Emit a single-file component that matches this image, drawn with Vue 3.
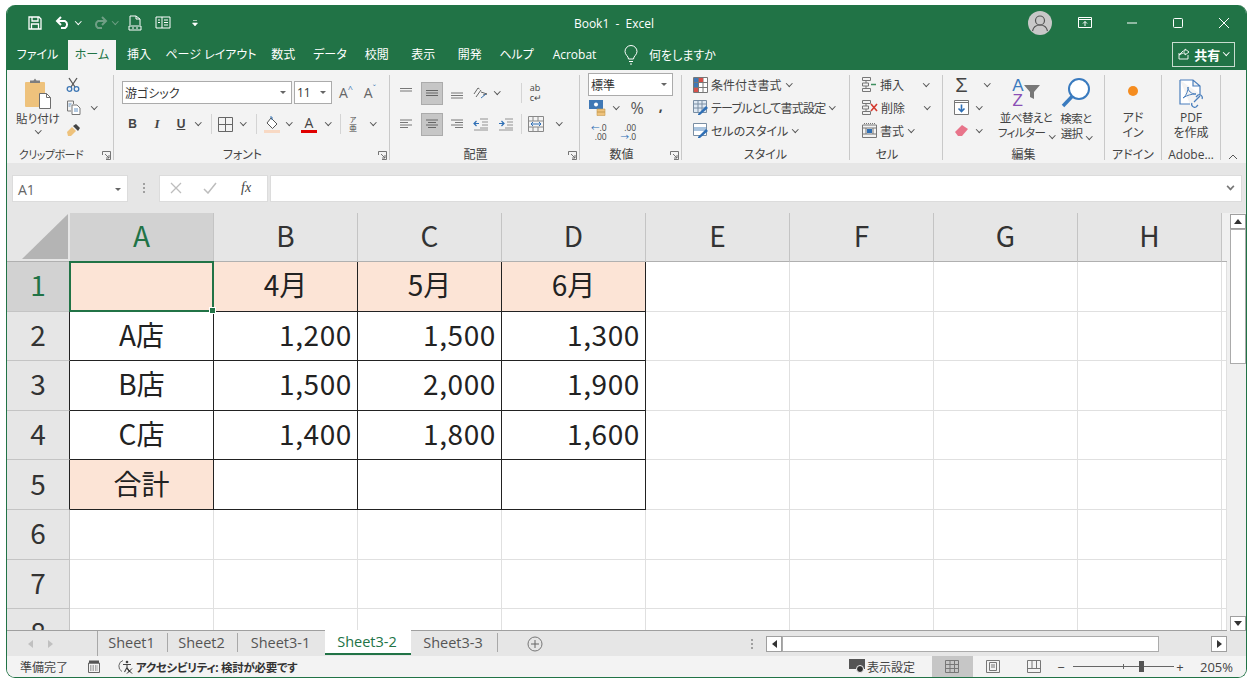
<script setup>
const columns = ['A', 'B', 'C', 'D', 'E', 'F', 'G', 'H']
const rowNumbers = [1, 2, 3, 4, 5, 6, 7, 8]
const tableRows = [
  { label: '', fill: true, values: ['4月', '5月', '6月'], head: true },
  { label: 'A店', values: ['1,200', '1,500', '1,300'] },
  { label: 'B店', values: ['1,500', '2,000', '1,900'] },
  { label: 'C店', values: ['1,400', '1,800', '1,600'] },
  { label: '合計', fill: true, values: ['', '', ''] }
]
const tabs = [
  { name: 'ファイル', cls: 't-file' },
  { name: 'ホーム', cls: 't-home' },
  { name: '挿入', cls: 't-ins' },
  { name: 'ページ レイアウト', cls: 't-page' },
  { name: '数式', cls: 't-a' },
  { name: 'データ', cls: 't-b' },
  { name: '校閲', cls: 't-a' },
  { name: '表示', cls: 't-a' },
  { name: '開発', cls: 't-a' },
  { name: 'ヘルプ', cls: 't-b' },
  { name: 'Acrobat', cls: 't-acro' }
]
const sheets = [
  { name: 'Sheet1', cls: 's-short' },
  { name: 'Sheet2', cls: 's-short' },
  { name: 'Sheet3-1', cls: 's-long' },
  { name: 'Sheet3-2', cls: 's-active' },
  { name: 'Sheet3-3', cls: 's-long' }
]
</script>

<template>
  <div class="window">
    <header class="titlebar">
      <div class="qat">
        <svg width="14" height="14" viewBox="0 0 14 14" class="q-save"><path d="M1 1h10l2 2v10H1z M4 1v4h6V1 M3.500 13V8h7v5" fill="none" stroke="#fff" stroke-width="1.300"/></svg>
        <svg width="16" height="13" viewBox="0 0 16 13" class="q-undo"><path d="M2 5h8a4 4 0 0 1 0 7H6M6 1L2 5l4 4" fill="none" stroke="#fff" stroke-width="2"/></svg>
        <span class="chev white q-chev"></span>
        <svg width="16" height="13" viewBox="0 0 16 13" class="q-redo"><path d="M14 5H6a4 4 0 0 0 0 7h4M10 1l4 4-4 4" fill="none" stroke="#6f9f85" stroke-width="2"/></svg>
        <span class="chev dim q-chev"></span>
        <svg width="14" height="16" viewBox="0 0 14 16" class="q-prev"><path d="M2 10V1h6l4 3v6M8 1v3h4M1 11h12v4H1z" fill="none" stroke="#fff"/><path d="M4 13h2M8 13h2" stroke="#fff"/></svg>
        <svg width="16" height="13" viewBox="0 0 16 13" class="q-form"><path d="M1 1h14v11H1zM7 1v11M9 4h4M9 6.500h4M9 9h4M3 4h2M3 6.500h2" fill="none" stroke="#fff"/></svg>
        <svg width="8" height="8" viewBox="0 0 8 8" class="q-more"><path d="M2 1.500h4M1.500 4h5L4 7z" fill="#fff" stroke="#fff" stroke-width=".6"/></svg>
      </div>
      <div class="doc-title">Book1 &nbsp;-&nbsp; Excel</div>
      <div class="win-ctrl">
        <svg width="24" height="24" viewBox="0 0 24 24" class="avatar"><circle cx="12" cy="12" r="12" fill="#c8c8c8"/><circle cx="12" cy="9.500" r="4.500" fill="none" stroke="#555" stroke-width="1.200"/><path d="M4.500 20c1-4.500 4-6 7.500-6s6.500 1.500 7.500 6" fill="none" stroke="#555" stroke-width="1.200"/></svg>
        <svg width="14" height="11" viewBox="0 0 14 11" class="c-disp"><path d="M.5.500h13v10H.5zM.5 2.500h13M7 9V4.500M5 6.500l2-2 2 2" fill="none" stroke="#fff"/></svg>
        <svg width="12" height="12" viewBox="0 0 12 12" class="c-min"><path d="M1 6h10" stroke="#fff"/></svg>
        <svg width="12" height="12" viewBox="0 0 12 12" class="c-max"><rect x="1.500" y="1.500" width="9" height="9" rx="1" fill="none" stroke="#fff"/></svg>
        <svg width="12" height="12" viewBox="0 0 12 12" class="c-close"><path d="M1 1l10 10M11 1L1 11" stroke="#fff"/></svg>
      </div>
    </header>

    <nav class="tabbar">
      <span v-for="tab in tabs" :key="tab.name" class="tab" :class="tab.cls">{{ tab.name }}</span>
      <svg width="14" height="20" viewBox="0 0 14 20" class="bulb"><path d="M4.500 14c0-3-3.500-4-3.500-7.500a6 6 0 0 1 12 0c0 3.500-3.500 4.500-3.500 7.500zM5 16.500h4M6 19h2" fill="none" stroke="#fff"/></svg>
      <span class="tell">何をしますか</span>
      <div class="share">
        <svg width="12" height="12" viewBox="0 0 12 12"><path d="M1 5v6h9V7M1 7l4-4h2V1l4 3-4 3V5H5z" fill="none" stroke="#fff" stroke-width=".9"/></svg>
        <b>共有</b>
        <span class="chev white"></span>
      </div>
    </nav>

    <section class="ribbon">
      <div class="group g-clip">
        <div class="g-body clip-body">
          <div class="paste">
            <svg width="28" height="31" viewBox="0 0 28 31"><rect x="1" y="4" width="20" height="25" rx="1" fill="#eec27c"/><path d="M6 5V2.500h3.500L11 .5l1.500 2H16V5z" fill="#7e7e7e"/><path d="M15.500 15.500h7l4 4v11h-11z" fill="#fff" stroke="#6e6e6e"/><path d="M22.500 15.500v4h4" fill="none" stroke="#6e6e6e"/></svg>
            <span>貼り付け</span>
            <span class="chev"></span>
          </div>
          <div class="clip-tools">
            <svg width="14" height="15" viewBox="0 0 14 15"><path d="M3 1l6 9M11 1L5 10" stroke="#555" stroke-width="1.300"/><circle cx="3.500" cy="12" r="2.300" fill="none" stroke="#3f78b5" stroke-width="1.300"/><circle cx="10.500" cy="12" r="2.300" fill="none" stroke="#3f78b5" stroke-width="1.300"/></svg>
            <svg width="15" height="15" viewBox="0 0 15 15"><path d="M1.500 1h6v3M1.500 1v10H5" fill="none" stroke="#777"/><path d="M6 5h5l3 3v6.500H6z" fill="#fff" stroke="#777"/><path d="M8 9h4M8 11h4M2.500 4h3M2.500 6h2" stroke="#3f78b5" stroke-width=".8"/></svg>
            <svg width="15" height="14" viewBox="0 0 15 14"><path d="M1 9l5-5 4 4-5 5H2z" fill="#eec27c"/><path d="M7 3l3-2 4 4-2 3z" fill="#444"/></svg>
          </div>
          <span class="chev clip-chev"></span>
        </div>
        <div class="g-foot"><i></i><span class="clip-label">クリップボード</span><svg class="launch" width="9" height="9" viewBox="0 0 9 9"><path d="M.5 4V.5H8.500V8.500H4M3 3l4 4M7 4v3H4" fill="none" stroke="#666" stroke-width=".9"/></svg></div>
      </div>

      <div class="group g-font">
        <div class="g-body">
          <div class="font-top">
            <div class="combo font-name"><span>游ゴシック</span><em class="drop"></em></div>
            <div class="combo font-size"><span>11</span><em class="drop"></em></div>
            <span class="grow">A<sup>^</sup></span>
            <span class="grow shrink">A<sup>ˇ</sup></span>
          </div>
          <div class="font-row">
            <b class="fmt">B</b>
            <i class="fmt serif">I</i>
            <u class="fmt">U</u>
            <span class="chev"></span>
            <span class="sep"></span>
            <svg width="15" height="15" viewBox="0 0 15 15"><path d="M.5.500h14v14H.500zM7.500.500v14M.5 7.500h14" fill="none" stroke="#666"/></svg>
            <span class="chev"></span>
            <span class="sep"></span>
            <svg width="16" height="17" viewBox="0 0 16 17"><path d="M7 2l6 6-4.500 4.500L3 7z" fill="#fff" stroke="#555"/><path d="M6 1h2v3" fill="none" stroke="#3f78b5"/><rect x="0" y="14" width="16" height="3" fill="#f8d9c4"/></svg>
            <span class="chev"></span>
            <span class="color-a">A</span>
            <span class="chev"></span>
            <span class="sep"></span>
            <span class="ruby"><small>ア</small>亜</span>
            <span class="chev"></span>
          </div>
        </div>
        <div class="g-foot"><i></i><span>フォント</span><svg class="launch" width="9" height="9" viewBox="0 0 9 9"><path d="M.5 4V.5H8.500V8.500H4M3 3l4 4M7 4v3H4" fill="none" stroke="#666" stroke-width=".9"/></svg></div>
      </div>

      <div class="group g-align">
        <div class="g-body">
          <div class="align-row first">
            <svg width="14" height="14" viewBox="0 0 14 14"><path d="M1 2.500h12M1 5h12" stroke="#777"/></svg>
            <span class="pressed"><svg width="14" height="14" viewBox="0 0 14 14"><path d="M1 4.500h12M1 7h12M1 9.500h12" stroke="#666"/></svg></span>
            <svg width="14" height="14" viewBox="0 0 14 14"><path d="M1 7h12M1 9.500h12M1 12h12" stroke="#777"/></svg>
            <svg width="16" height="14" viewBox="0 0 16 14"><path d="M2 8l4-6 1.500 1M4 11l5-7M9 6l6 2-4 1" fill="none" stroke="#666"/><path d="M9 12l5-4" stroke="#3f78b5"/></svg>
            <span class="chev orient-chev"></span>
            <span class="sep"></span>
            <span class="wrap-ab">ab<br>c↵</span>
            <i></i>
          </div>
          <div class="align-row">
            <svg width="14" height="14" viewBox="0 0 14 14"><path d="M1 3h12M1 5.500h8M1 8h12M1 10.500h8" stroke="#777"/></svg>
            <span class="pressed"><svg width="14" height="14" viewBox="0 0 14 14"><path d="M1 3h12M3 5.500h8M1 8h12M3 10.500h8" stroke="#666"/></svg></span>
            <svg width="14" height="14" viewBox="0 0 14 14"><path d="M1 3h12M5 5.500h8M1 8h12M5 10.500h8" stroke="#777"/></svg>
            <svg width="15" height="14" viewBox="0 0 15 14"><path d="M7 2h8M9 5h6M9 8h6M7 11h8M1 13h14" stroke="#888" stroke-width=".9"/><path d="M6 6.500H1M3.500 4L1 6.500 3.500 9" fill="none" stroke="#2f6fb5" stroke-width="1.200"/></svg>
            <svg width="15" height="14" viewBox="0 0 15 14"><path d="M7 2h8M9 5h6M9 8h6M7 11h8M1 13h14" stroke="#888" stroke-width=".9"/><path d="M1 6.500h5M3.500 4L6 6.500 3.500 9" fill="none" stroke="#2f6fb5" stroke-width="1.200"/></svg>
            <span class="sep"></span>
            <svg width="16" height="16" viewBox="0 0 16 16"><path d="M.5.500h15v15H.5zM.5 5h15M.5 11h15M5 .5V5M10 .5V5M5 11v4.500M10 11v4.500" fill="none" stroke="#888"/><path d="M3 8h10M5 6l-2 2 2 2M11 6l2 2-2 2" fill="none" stroke="#2f6fb5"/></svg>
            <span class="chev"></span>
          </div>
        </div>
        <div class="g-foot"><i></i><span>配置</span><svg class="launch" width="9" height="9" viewBox="0 0 9 9"><path d="M.5 4V.5H8.500V8.500H4M3 3l4 4M7 4v3H4" fill="none" stroke="#666" stroke-width=".9"/></svg></div>
      </div>

      <div class="group g-num">
        <div class="g-body tight">
          <div class="combo num-format"><span>標準</span><em class="drop"></em></div>
          <div class="num-row">
            <svg width="17" height="16" viewBox="0 0 17 16"><rect x="0" y="0" width="14" height="9" fill="#3f78b5"/><circle cx="7" cy="4.500" r="2" fill="#fff"/><path d="M8 9h8v3H8zM8 12h8v3.500H8z" fill="#eec27c" stroke="#c79a4f" stroke-width=".6"/></svg>
            <span class="chev"></span>
            <span class="percent">%</span>
            <b class="comma">,</b>
          </div>
          <div class="dec-row">
            <span class="dec"><i>←</i>.0<br>.00</span>
            <span class="dec">.00<br><i>→</i>.0</span>
          </div>
        </div>
        <div class="g-foot"><i></i><span>数値</span><svg class="launch" width="9" height="9" viewBox="0 0 9 9"><path d="M.5 4V.5H8.500V8.500H4M3 3l4 4M7 4v3H4" fill="none" stroke="#666" stroke-width=".9"/></svg></div>
      </div>

      <div class="group g-style">
        <div class="g-body tight">
          <div class="line-btn">
            <svg width="15" height="16" viewBox="0 0 15 16"><path d="M.5.500h14v15H.5zM5.500.5v15M10 .5v15M.5 5.500h14M.5 10.500h14" fill="#fff" stroke="#777"/><rect x="6" y="1" width="4" height="4" fill="#d8504a"/><rect x="1" y="6" width="4" height="4" fill="#3f78b5"/><rect x="1" y="1" width="4" height="4" fill="#3f78b5"/><rect x="1" y="11" width="4" height="4" fill="#d8504a"/></svg>
            <span>条件付き書式</span><span class="chev"></span>
          </div>
          <div class="line-btn">
            <svg width="15" height="15" viewBox="0 0 15 15"><path d="M.5.500h13v12H.5zM.5 4h13M.5 8h13M5 .5v12M9 .5v12" fill="#dfe9f3" stroke="#7a8ea3"/><path d="M5 14L13 6l2 2-8 7H5z" fill="#2f6fb5"/></svg>
            <span class="table-fmt">テーブルとして書式設定</span><span class="chev"></span>
          </div>
          <div class="line-btn">
            <svg width="15" height="15" viewBox="0 0 15 15"><path d="M.5.500h13v12H.5z" fill="#fff" stroke="#7a8ea3"/><rect x="1" y="4" width="12" height="4" fill="#a9c4df"/><path d="M5 14L13 6l2 2-8 7H5z" fill="#2f6fb5"/></svg>
            <span>セルのスタイル</span><span class="chev"></span>
          </div>
        </div>
        <div class="g-foot plain"><span>スタイル</span></div>
      </div>

      <div class="group g-cell">
        <div class="g-body tight">
          <div class="line-btn">
            <svg width="15" height="15" viewBox="0 0 15 15"><path d="M.5.500h8v3h-8zM.5 6h6v3h-6zM.5 11.500h8v3h-8zM4 3.500V6M4 9v2.500" fill="none" stroke="#777"/><path d="M9 7.500h5" stroke="#3f8f5f" stroke-width="1.500"/></svg>
            <span class="cell-txt">挿入</span><span class="chev"></span>
          </div>
          <div class="line-btn">
            <svg width="16" height="15" viewBox="0 0 16 15"><path d="M.5.500h8v3h-8zM.5 6h6v3h-6zM.5 11.500h8v3h-8zM4 3.500V6M4 9v2.500" fill="none" stroke="#777"/><path d="M9 4l6 7M15 4l-6 7" stroke="#d43b30" stroke-width="1.600"/></svg>
            <span class="cell-txt">削除</span><span class="chev"></span>
          </div>
          <div class="line-btn">
            <svg width="15" height="15" viewBox="0 0 15 15"><path d="M.5 2h14v12.500H.5zM.5 5h14M.5 11h14M4 5v6M11 5v6" fill="none" stroke="#777"/><rect x="5" y="6" width="5" height="4" fill="#2f6fb5"/><path d="M2 .5h11" stroke="#777" stroke-dasharray="1 1"/></svg>
            <span>書式</span><span class="chev"></span>
          </div>
        </div>
        <div class="g-foot plain cell-foot"><span>セル</span></div>
      </div>

      <div class="group g-edit">
        <div class="g-body edit-body">
          <div class="edit-tools">
            <div class="edit-line"><span class="sigma">Σ</span><span class="chev sig-chev"></span></div>
            <div class="edit-line"><svg width="15" height="15" viewBox="0 0 15 15"><path d="M.5.500h14v14H.5zM.5 2.500h14" fill="#fff" stroke="#777"/><path d="M7.500 4.500v7M4.500 8.500l3 3 3-3" fill="none" stroke="#2f6fb5" stroke-width="1.600"/></svg><span class="chev"></span></div>
            <div class="edit-line"><svg width="15" height="13" viewBox="0 0 15 13"><path d="M1 8l7-7 6 4-6 7H4z" fill="#e8748a"/></svg><span class="chev"></span></div>
          </div>
          <div class="big-btn sort">
            <div class="sort-icon">
              <span class="az"><b>A</b><b>Z</b></span>
              <svg width="16" height="14" viewBox="0 0 16 14"><path d="M0 0h16l-6 7v7l-4-2V7z" fill="#777"/></svg>
            </div>
            <span>並べ替えと</span>
            <span>フィルター <i class="chev"></i></span>
          </div>
          <div class="big-btn find">
            <svg width="30" height="31" viewBox="0 0 30 31"><circle cx="18" cy="11" r="10" fill="#fff" stroke="#3a7bbf" stroke-width="2"/><path d="M11 18.500L2 28" stroke="#3a7bbf" stroke-width="3.500"/></svg>
            <span>検索と</span>
            <span>選択 <i class="chev"></i></span>
          </div>
        </div>
        <div class="g-foot plain"><span>編集</span></div>
      </div>

      <div class="group g-addin">
        <div class="g-body">
          <div class="big-btn">
            <svg width="30" height="30" viewBox="0 0 30 30"><circle cx="15" cy="13" r="5" fill="#f58c1f"/></svg>
            <span>アド</span>
            <span>イン</span>
          </div>
        </div>
        <div class="g-foot plain"><span>アドイン</span></div>
      </div>

      <div class="group g-pdf">
        <div class="g-body">
          <div class="big-btn">
            <svg width="30" height="30" viewBox="0 0 30 30"><path d="M4 2h13l7 6v8M4 2v24h10M17 2v6h7" fill="#fff" stroke="#4a7fbd" stroke-width="1.200"/><path d="M7 20c4-3 5-8 5-11 0 4 3 7 8 7-4 0-9 1-13 4z" fill="none" stroke="#4a7fbd"/><path d="M18 24l6-6M16 25a3 3 0 0 0 4 4l2-2M26 21a3 3 0 0 0-4-4l-2 2" fill="none" stroke="#4a7fbd" stroke-width="1.300"/></svg>
            <span>PDF</span>
            <span>を作成</span>
          </div>
        </div>
        <div class="g-foot plain"><span>Adobe…</span></div>
      </div>

      <div class="collapse"><svg width="10" height="6" viewBox="0 0 10 6"><path d="M1 5l4-4 4 4" fill="none" stroke="#555"/></svg></div>
    </section>

    <div class="formula-strip">
      <div class="name-box"><span>A1</span><em class="drop"></em></div>
      <div class="dots"></div>
      <div class="fx-box">
        <svg width="12" height="12" viewBox="0 0 12 12"><path d="M1 1l10 10M11 1L1 11" stroke="#bdbdbd" stroke-width="1.300"/></svg>
        <svg width="14" height="12" viewBox="0 0 14 12"><path d="M1 7l4 4 8-10" fill="none" stroke="#bdbdbd" stroke-width="1.500"/></svg>
        <i>fx</i>
      </div>
      <div class="formula-input"><em class="wide-chev"></em></div>
    </div>

    <main class="sheet-area">
      <div class="grid">
        <div class="corner"><svg width="46" height="45" viewBox="0 0 46 45"><path d="M46 0v45H0z" fill="#b4b4b4"/></svg></div>
        <div v-for="(col, c) in columns" :key="col" class="col-head" :class="{ on: c === 0 }">{{ col }}</div>
        <div class="col-end"></div>

        <template v-for="(num, r) in rowNumbers" :key="num">
          <div class="row-head" :class="{ on: r === 0, inked: r > 0 && r < 5 }">{{ num }}</div>
          <template v-if="r < tableRows.length">
            <div class="cell ink center" :class="{ fill: tableRows[r].fill, 'a-cell': r === 0 }">
              {{ tableRows[r].label }}
              <span v-if="r === 0" class="selection"><span class="handle"></span></span>
            </div>
            <div v-for="(val, i) in tableRows[r].values" :key="i" class="cell ink" :class="{ fill: tableRows[r].head, center: tableRows[r].head, num: !tableRows[r].head }">{{ val }}</div>
            <div v-for="n in 5" :key="'e' + n" class="cell"></div>
          </template>
          <template v-else>
            <div v-for="n in 9" :key="'b' + n" class="cell"></div>
          </template>
        </template>
      </div>
      <aside class="vscroll">
        <button class="sb-btn"><svg width="8" height="5" viewBox="0 0 8 5"><path d="M4 0l4 5H0z" fill="#333"/></svg></button>
        <div class="v-thumb"></div>
        <div class="v-rest"></div>
        <button class="sb-btn"><svg width="8" height="5" viewBox="0 0 8 5"><path d="M0 0h8L4 5z" fill="#333"/></svg></button>
      </aside>
    </main>

    <div class="sheetbar">
      <div class="sheet-nav">
        <svg width="5" height="8" viewBox="0 0 5 8"><path d="M5 0v8L0 4z" fill="#c0c0c0"/></svg>
        <svg width="5" height="8" viewBox="0 0 5 8"><path d="M0 0v8l5-4z" fill="#c0c0c0"/></svg>
      </div>
      <div class="sheet-tabs">
        <span v-for="s in sheets" :key="s.name" class="sheet" :class="s.cls">{{ s.name }}</span>
      </div>
      <svg class="add-sheet" width="16" height="16" viewBox="0 0 16 16"><circle cx="8" cy="8" r="7" fill="none" stroke="#777"/><path d="M8 4v8M4 8h8" stroke="#666"/></svg>
      <div class="split-grip"></div>
      <div class="hscroll">
        <button class="h-btn"><svg width="5" height="8" viewBox="0 0 5 8"><path d="M5 0v8L0 4z" fill="#333"/></svg></button>
        <div class="h-thumb"></div>
        <button class="h-btn end"><svg width="5" height="8" viewBox="0 0 5 8"><path d="M0 0v8l5-4z" fill="#333"/></svg></button>
      </div>
    </div>

    <footer class="statusbar">
      <span class="ready">準備完了</span>
      <svg class="macro" width="12" height="13" viewBox="0 0 12 13"><path d="M.5 3h11v9.500H.5z" fill="none" stroke="#666"/><path d="M1 .5h10v3H1z" fill="#555"/><path d="M2 6h8M2 8h8M2 10h8" stroke="#666" stroke-dasharray="1.500 1"/></svg>
      <svg class="access" width="16" height="15" viewBox="0 0 16 15"><path d="M5 1.500A6 6 0 0 0 4 12.500" fill="none" stroke="#666"/><circle cx="9" cy="3" r="1.300" fill="#444"/><path d="M5 5.500h8M9 5.500v3M6.500 13l2.500-4.500 2.500 4.500" fill="none" stroke="#444" stroke-width="1.100"/><path d="M9 9.500l5 5M14 9.500l-5 5" stroke="#222"/></svg>
      <span class="a11y">アクセシビリティ: 検討が必要です</span>
      <span class="grow-space"></span>
      <div class="disp-set">
        <svg width="17" height="15" viewBox="0 0 17 15"><rect x="0" y="0" width="16" height="10" fill="#555"/><circle cx="11" cy="10" r="3.500" fill="#333" stroke="#f3f3f3"/></svg>
        <span>表示設定</span>
      </div>
      <div class="view on"><svg width="14" height="13" viewBox="0 0 14 13"><path d="M.5.500h13v12H.5zM.5 4.500h13M.5 8.500h13M5 .5v12M9.500.5v12" fill="none" stroke="#777"/></svg></div>
      <div class="view"><svg width="14" height="13" viewBox="0 0 14 13"><path d="M.5.500h13v12H.5zM3.500 2.500h7v8h-7zM5 5h4M5 7h4" fill="none" stroke="#777"/></svg></div>
      <div class="view"><svg width="14" height="13" viewBox="0 0 14 13"><path d="M.5.500h13v12H.5zM.5 8.500h13M5 .5v8M9.500.5v8" fill="none" stroke="#777"/></svg></div>
      <span class="zoom-sign minus">−</span>
      <div class="slider"><i class="tick"></i><i class="knob"></i></div>
      <span class="zoom-sign">+</span>
      <span class="zoom-val">205%</span>
    </footer>
  </div>
</template>

<style>
html, body {
  margin: 0;
  background: #ffffff;
}
</style>

<style scoped>
.window {
  margin: 5px 0 0 6px;
  width: 1241px;
  height: 673px;
  box-sizing: border-box;
  border: 1px solid #217346;
  border-top: 0;
  border-radius: 9px;
  overflow: hidden;
  display: flex;
  flex-direction: column;
  background: #f3f3f3;
  font-family: "Open Sans", "Noto Sans CJK JP", sans-serif;
  font-feature-settings: "palt";
  color: #444;
}

svg {
  flex: none;
  display: block;
}

.chev {
  display: inline-block;
  flex: none;
  width: 3.500px;
  height: 3.500px;
  margin-top: -3px;
  border-right: 1.200px solid #555;
  border-bottom: 1.200px solid #555;
  transform: rotate(45deg);
}

.chev.white {
  border-color: #fff;
}

.chev.dim {
  border-color: #6f9f85;
}

.drop {
  width: 0;
  height: 0;
  border-left: 3px solid transparent;
  border-right: 3px solid transparent;
  border-top: 3px solid #666;
}

/* title */
.titlebar {
  height: 35px;
  flex: none;
  display: flex;
  align-items: center;
  background: #217346;
  color: #fff;
}

.qat {
  display: flex;
  align-items: center;
  width: 195px;
  padding-left: 21px;
  box-sizing: border-box;
}

.q-undo { margin-left: 13px; }
.q-chev { margin-left: 5px; }
.q-redo { margin-left: 11px; }
.q-prev { margin-left: 11px; }
.q-form { margin-left: 13px; }
.q-more { margin-left: 20px; }

.doc-title {
  width: 440px;
  margin-left: 192px;
  text-align: center;
  font-size: 12px;
  padding-top: 1px;
  box-sizing: border-box;
}

.win-ctrl {
  margin-left: auto;
  display: flex;
  align-items: center;
}

.c-disp { margin-left: 26px; }
.c-min { margin-left: 34px; }
.c-max { margin-left: 34px; }
.c-close { margin-left: 34px; margin-right: 16px; }

/* tabs */
.tabbar {
  height: 30px;
  flex: none;
  display: flex;
  align-items: center;
  background: #217346;
  color: #fff;
  font-size: 12px;
}

.tab {
  text-align: center;
  line-height: 30px;
  height: 30px;
  flex: none;
}

.t-file { width: 61px; }
.t-home { width: 48px; background: #f3f3f3; color: #217346; }
.t-ins { width: 46px; }
.t-page { width: 98px; }
.t-a { width: 46.500px; }
.t-b { width: 47px; }
.t-acro { width: 69px; }

.bulb { margin-left: 15px; }

.tell {
  margin-left: 11px;
}

.share {
  margin-left: auto;
  margin-right: 11px;
  margin-bottom: 2px;
  width: 63px;
  height: 25px;
  box-sizing: border-box;
  border: 1px solid #c8dccf;
  display: flex;
  align-items: center;
  justify-content: center;
  gap: 4px;
  font-size: 13px;
}

/* ribbon */
.ribbon {
  height: 93px;
  flex: none;
  display: flex;
  padding-top: 5px;
  box-sizing: border-box;
  background: #f3f3f3;
  font-size: 12px;
}

.group {
  height: 85px;
  flex: none;
  box-sizing: border-box;
  border-right: 1.500px solid #c9c9c9;
  display: flex;
  flex-direction: column;
}

.g-clip { width: 107px; }
.g-font { width: 276px; }
.g-align { width: 190px; }
.g-num { width: 102px; }
.g-style { width: 168px; }
.g-cell { width: 93px; }
.g-edit { width: 162px; }
.g-addin { width: 57px; }
.g-pdf { width: 59px; }

.g-body {
  height: 73px;
  flex: none;
}

.g-body.tight {
  margin-top: -2px;
  height: 75px;
}

.g-foot {
  height: 14px;
  flex: none;
  line-height: 14px;
  font-size: 12px;
  display: grid;
  grid-template-columns: 1fr auto 1fr;
  align-items: center;
  justify-items: center;
  color: #444;
}

.g-foot span {
  margin-right: 18px;
}

.g-foot.plain {
  display: block;
  text-align: center;
}

.g-foot.plain span {
  margin-right: 0;
}

.g-foot.cell-foot span {
  margin-right: 18px;
}

.clip-label {
  font-size: 11px;
  letter-spacing: -.5px;
  white-space: nowrap;
}

.launch {
  justify-self: end;
  margin-right: 2px;
}

/* clipboard */
.clip-body {
  display: flex;
  padding-top: 3px;
  box-sizing: border-box;
}

.paste {
  width: 56px;
  margin-left: 3px;
  display: flex;
  flex-direction: column;
  align-items: center;
  font-size: 11.500px;
  line-height: 15px;
}

.paste svg {
  margin-bottom: 2px;
}

.paste .chev {
  margin-top: 2px;
}

.clip-tools {
  display: flex;
  flex-direction: column;
  justify-content: space-between;
  align-items: center;
  height: 60px;
  width: 16px;
  margin-left: -1px;
  margin-top: -1px;
}

.clip-chev {
  margin-left: 11px;
  margin-top: 26px;
}

/* font */
.font-top {
  margin-top: 6px;
  height: 23px;
  display: flex;
  align-items: center;
  padding-left: 8px;
}

.combo {
  box-sizing: border-box;
  border: 1px solid #ababab;
  background: #fff;
  display: flex;
  align-items: center;
  justify-content: space-between;
  padding: 0 5px 0 2px;
  color: #333;
  font-size: 12px;
}

.font-name {
  width: 170px;
  height: 23px;
}

.font-size {
  width: 38px;
  height: 23px;
  margin-left: 2px;
}

.grow {
  margin-left: 3px;
  width: 22px;
  font-size: 14px;
  color: #666;
  text-align: center;
}

.grow sup {
  font-size: 9px;
  line-height: 0;
  color: #3f78b5;
}

.shrink {
  margin-left: 2px;
}

.font-row {
  margin-top: 8px;
  height: 24px;
  padding-left: 6px;
  display: grid;
  grid-template-columns: 25px 24px 24px 10px 16px 12px 24px 2px 30px 4px 36px 2px 22px 4px 36px;
  align-items: center;
  justify-items: center;
}

.fmt {
  font-size: 12px;
  color: #444;
  font-family: "Liberation Sans", sans-serif;
}

.serif {
  font-family: "Liberation Serif", serif;
  font-weight: 700;
  font-size: 13px;
}

u.fmt {
  font-weight: 700;
}

.sep {
  width: 1px;
  height: 20px;
  background: #d4d4d4;
}

.color-a {
  font-size: 14px;
  line-height: 14px;
  width: 16px;
  text-align: center;
  color: #444;
  border-bottom: 3px solid #e00000;
}

.ruby {
  font-size: 8px;
  line-height: 8px;
  width: 8px;
  text-align: center;
}

.ruby small {
  display: block;
  font-size: 7px;
}

/* alignment */
.align-row {
  height: 24px;
  padding-left: 5px;
  display: grid;
  grid-template-columns: 22px 30px 20px 26px 24px 8px 22px 24px;
  align-items: center;
  justify-items: center;
  margin-top: 7px;
}

.align-row.first {
  margin-top: 6px;
}

.orient-chev {
  margin-right: 16px;
}

.pressed {
  width: 22px;
  height: 23px;
  box-sizing: border-box;
  background: #c6c6c6;
  border: 1px solid #ababab;
  display: flex;
  align-items: center;
  justify-content: center;
}

.wrap-ab {
  font-size: 9px;
  line-height: 10px;
  color: #444;
}

/* number */
.num-format {
  width: 85px;
  height: 23px;
  margin-left: 8px;
}

.num-row {
  height: 24px;
  display: flex;
  align-items: center;
  padding-left: 9px;
}

.num-row .chev {
  margin-left: 8px;
}

.percent {
  margin-left: 12px;
  font-size: 16px;
  color: #555;
}

.comma {
  margin-left: 15px;
  font-size: 14px;
  color: #444;
  margin-top: -6px;
}

.dec-row {
  height: 24px;
  padding-left: 11px;
  display: flex;
  gap: 14px;
  align-items: center;
}

.dec {
  font-size: 8.500px;
  line-height: 9px;
  color: #444;
  text-align: right;
}

.dec i {
  font-style: normal;
  color: #2f6fb5;
}

/* style and cell rows */
.line-btn {
  height: 23px;
  display: flex;
  align-items: center;
  padding-left: 11px;
  font-size: 12px;
  color: #444;
}

.line-btn svg {
  margin-right: 3px;
}

.line-btn .chev {
  margin-left: 5px;
}

.table-fmt {
  letter-spacing: -.8px;
}

.g-cell .line-btn {
  padding-left: 12px;
}

.cell-txt {
  width: 39px;
}

/* editing */
.edit-body {
  display: flex;
  box-sizing: border-box;
}

.edit-tools {
  width: 58px;
  margin-top: -2px;
}

.edit-line {
  height: 23px;
  display: flex;
  align-items: center;
  padding-left: 11px;
  gap: 8px;
}

.sigma {
  font-size: 20px;
  line-height: 20px;
  color: #444;
  width: 15px;
  text-align: center;
  font-family: "Liberation Sans", sans-serif;
}

.sig-chev {
  margin-left: 8px;
}

.big-btn {
  display: flex;
  flex-direction: column;
  align-items: center;
  line-height: 15px;
  font-size: 12px;
  white-space: nowrap;
  padding-top: 3px;
}

.big-btn svg {
  margin-bottom: 2px;
}

.big-btn i {
  margin-left: 2px;
}

.sort-icon {
  height: 32px;
  display: flex;
  align-items: flex-start;
  color: #444;
}

.az {
  display: flex;
  flex-direction: column;
  align-items: center;
  font-size: 17px;
  line-height: 15px;
  font-family: "Liberation Sans", sans-serif;
}

.az b {
  font-weight: 400;
  color: #3a7bbf;
}

.az b + b {
  color: #8a4fb5;
}

.sort-icon svg {
  margin: 7px 0 0 1px;
}

.sort {
  width: 50px;
  font-size: 11.500px;
  letter-spacing: -.6px;
}

.find {
  width: 50px;
  font-size: 11.500px;
  letter-spacing: -.6px;
}

.collapse {
  align-self: flex-end;
  margin-left: 7px;
  padding-bottom: 3px;
}

/* formula bar */
.formula-strip {
  height: 50px;
  flex: none;
  display: flex;
  align-items: center;
  background: #e6e6e6;
  padding: 0 4px 0 5px;
  box-sizing: border-box;
}

.name-box {
  width: 116px;
  height: 27px;
  box-sizing: border-box;
  background: #fff;
  border: 1px solid #dcdcdc;
  display: flex;
  align-items: center;
  justify-content: space-between;
  padding: 2px 6px 0 5px;
  font-size: 14px;
  color: #666;
}

.dots {
  width: 2px;
  height: 10px;
  margin: 0 14px 0 15px;
  background: repeating-linear-gradient(#a0a0a0 0 2px, transparent 2px 4px);
}

.fx-box {
  width: 109px;
  height: 27px;
  box-sizing: border-box;
  background: #fff;
  border: 1px solid #dcdcdc;
  display: flex;
  align-items: center;
  padding-left: 10px;
  gap: 21px;
}

.fx-box i {
  font-family: "Liberation Serif", serif;
  font-size: 14px;
  color: #444;
  margin-left: 3px;
}

.formula-input {
  width: 972px;
  flex: none;
  height: 27px;
  margin-left: 2px;
  box-sizing: border-box;
  background: #fff;
  border: 1px solid #dcdcdc;
  display: flex;
  align-items: center;
  justify-content: flex-end;
  padding-right: 7px;
}

.wide-chev {
  width: 5px;
  height: 5px;
  margin-top: -3px;
  border-right: 2px solid #777;
  border-bottom: 2px solid #777;
  transform: rotate(45deg) scale(.8);
}

/* sheet */
.sheet-area {
  height: 418px;
  flex: none;
  display: flex;
  background: #fff;
  overflow: hidden;
}

.grid {
  width: 1220px;
  flex: none;
  display: grid;
  grid-template-columns: 63px repeat(8, 144px) 5px;
  grid-auto-rows: 49.600px;
  grid-template-rows: 49px;
  font-family: "Noto Sans CJK JP", sans-serif;
  font-feature-settings: normal;
  font-size: 28px;
  color: #222;
  border-bottom: 1px solid #9f9f9f;
  box-sizing: border-box;
  height: 418px;
  overflow: hidden;
}

.corner {
  background: #e6e6e6;
  display: flex;
  align-items: flex-end;
  justify-content: flex-end;
  padding: 0 2px 2px 0;
  box-sizing: border-box;
  border-bottom: 1px solid #b0b0b0;
}

.col-head {
  background: #e6e6e6;
  border-right: 1px solid #c4c4c4;
  border-bottom: 1px solid #b0b0b0;
  display: flex;
  align-items: center;
  justify-content: center;
  box-sizing: border-box;
  padding-bottom: 4px;
  color: #333;
}

.col-head.on {
  background: #d2d2d2;
  color: #217346;
}

.col-end {
  background: #f0f0f0;
  border-bottom: 1px solid #b0b0b0;
  box-sizing: border-box;
}

.row-head {
  background: #e6e6e6;
  border-right: 1px solid #c4c4c4;
  border-bottom: 1px solid #c4c4c4;
  display: flex;
  align-items: center;
  justify-content: center;
  box-sizing: border-box;
  padding-bottom: 4px;
  color: #333;
}

.row-head.on {
  background: #d2d2d2;
  color: #217346;
}

.row-head.inked {
  border-right-color: #222;
}

.cell {
  box-sizing: border-box;
  border-right: 1px solid #e0e0e0;
  border-bottom: 1px solid #e0e0e0;
  background: #fff;
  display: flex;
  align-items: center;
  padding-bottom: 4px;
  color: #222;
}

.cell.ink {
  border-right-color: #222;
  border-bottom-color: #222;
}

.cell.fill {
  background: #fce4d6;
}

.cell.center {
  justify-content: center;
}

.cell.num {
  justify-content: flex-end;
  padding-right: 5px;
  letter-spacing: .6px;
}

.a-cell {
  position: relative;
}

.selection {
  position: absolute;
  inset: -1px -1px -1px -1px;
  border: 2px solid #217346;
  pointer-events: none;
}

.handle {
  position: absolute;
  right: -4px;
  bottom: -4px;
  width: 5px;
  height: 5px;
  background: #217346;
  border: 1px solid #fff;
}

.vscroll {
  width: 19px;
  flex: none;
  display: flex;
  flex-direction: column;
  align-items: flex-end;
  padding-top: 1px;
  background: #f0f0f0;
  box-sizing: border-box;
}

.sb-btn {
  width: 16px;
  height: 15px;
  flex: none;
  padding: 0;
  background: #fff;
  border: 1px solid #9f9f9f;
  display: flex;
  align-items: center;
  justify-content: center;
}

.v-thumb {
  height: 135px;
  width: 16px;
  background: #fff;
  border: 1px solid #ababab;
  box-sizing: border-box;
  flex: none;
}

.v-rest {
  flex: 1;
}

/* sheet tabs */
.sheetbar {
  height: 25px;
  flex: none;
  display: flex;
  align-items: center;
  background: #e6e6e6;
  font-size: 14.500px;
  color: #555;
}

.sheet-nav {
  width: 90px;
  display: flex;
  gap: 15px;
  padding-left: 21px;
  box-sizing: border-box;
  flex: none;
}

.sheet-tabs {
  display: flex;
  align-items: stretch;
  height: 25px;
  border-left: 1px solid #a8a8a8;
}

.sheet {
  display: flex;
  align-items: center;
  justify-content: center;
  box-sizing: border-box;
  height: 19px;
  margin-top: 2px;
  padding-right: 2px;
  border-right: 1px solid #a8a8a8;
}

.s-short { width: 70px; }
.s-long { width: 87px; }

.s-active {
  width: 86px;
  height: 25px;
  margin: -1px 0 0 0;
  background: #fff;
  color: #217346;
  border-right: 0;
  border-bottom: 2px solid #217346;
}

.s-long:nth-child(3) {
  border-right: 0;
}

.add-sheet {
  margin-left: 29px;
}

.split-grip {
  width: 2px;
  height: 10px;
  margin-left: 208px;
  background: repeating-linear-gradient(#a0a0a0 0 2px, transparent 2px 4px);
}

.hscroll {
  width: 461px;
  margin-left: 13px;
  height: 16px;
  display: flex;
  align-items: center;
  flex: none;
}

.h-btn {
  width: 16px;
  height: 16px;
  flex: none;
  padding: 0;
  background: #fff;
  border: 1px solid #9f9f9f;
  display: flex;
  align-items: center;
  justify-content: center;
}

.h-btn.end {
  margin-left: auto;
}

.h-thumb {
  width: 377px;
  height: 16px;
  background: #fff;
  border: 1px solid #ababab;
  box-sizing: border-box;
}

/* status */
.statusbar {
  flex: 1;
  display: flex;
  align-items: center;
  background: #f3f3f3;
  font-size: 12px;
  color: #444;
  padding-left: 13px;
}

.macro { margin-left: 20px; }
.access { margin-left: 18px; }

.a11y {
  margin-left: 2px;
  font-weight: 700;
  font-size: 11.500px;
  letter-spacing: -.3px;
  color: #333;
}

.grow-space {
  flex: 1;
}

.disp-set {
  display: flex;
  align-items: center;
  gap: 1px;
  color: #444;
  font-size: 12px;
  margin-right: 17px;
}

.view {
  width: 41px;
  height: 21px;
  display: flex;
  align-items: center;
  justify-content: center;
}

.view.on {
  background: #c6c6c6;
}

.zoom-sign {
  margin: 0 1px;
  font-size: 13px;
  width: 8px;
  text-align: center;
}

.zoom-sign.minus {
  margin: 0 5px 0 2px;
}

.slider {
  width: 101px;
  height: 1px;
  margin: 0 1px 0 3px;
  background: #666;
  display: flex;
  align-items: center;
}

.tick {
  width: 1px;
  height: 5px;
  margin-left: 50px;
  background: #666;
}

.knob {
  width: 5px;
  height: 11px;
  margin-left: 15px;
  background: #555;
}

.zoom-val {
  margin-left: 15px;
  margin-right: 13px;
  font-size: 13px;
}
</style>
